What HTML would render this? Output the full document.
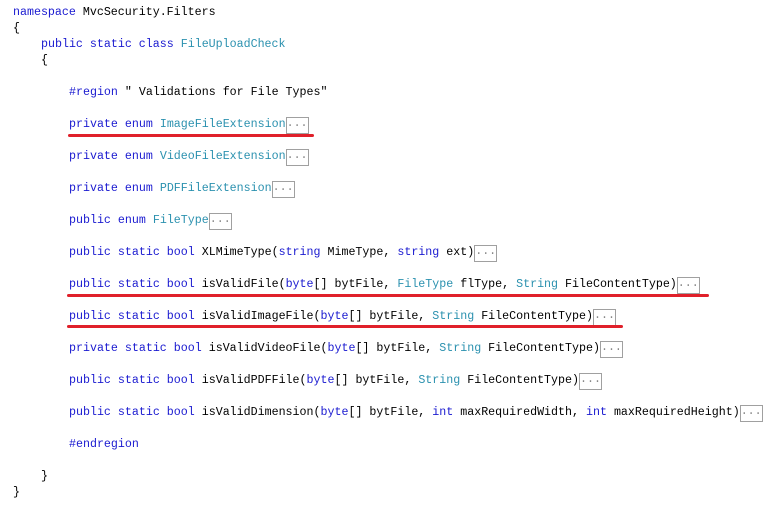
<!DOCTYPE html>
<html><head><style>
body{margin:0;width:773px;height:519px;background:#fff;position:relative;overflow:hidden;font-family:"Liberation Mono",monospace;font-size:11.65px;color:#000}
.l{position:absolute;left:13px;height:16px;line-height:16px;white-space:pre}
.k{color:#1a1ad0}.t{color:#2b91af}
.b{display:inline-block;border:1px solid #a0a0a0;color:#888;height:15px;line-height:12px;vertical-align:top}
.r{position:absolute;height:3px;background:#e0202a;border-radius:2px}
</style></head><body>
<div class="l" style="top:5px"><span class="k">namespace</span> MvcSecurity.Filters</div>
<div class="l" style="top:21px">{</div>
<div class="l" style="top:37px;left:41px"><span class="k">public static class</span> <span class="t">FileUploadCheck</span></div>
<div class="l" style="top:53px;left:41px">{</div>
<div class="l" style="top:85px;left:69px"><span class="k">#region</span> " Validations for File Types"</div>
<div class="l" style="top:117px;left:69px"><span class="k">private enum</span> <span class="t">ImageFileExtension</span><span class="b">...</span></div>
<div class="l" style="top:149px;left:69px"><span class="k">private enum</span> <span class="t">VideoFileExtension</span><span class="b">...</span></div>
<div class="l" style="top:181px;left:69px"><span class="k">private enum</span> <span class="t">PDFFileExtension</span><span class="b">...</span></div>
<div class="l" style="top:213px;left:69px"><span class="k">public enum</span> <span class="t">FileType</span><span class="b">...</span></div>
<div class="l" style="top:245px;left:69px"><span class="k">public static bool</span> XLMimeType(<span class="k">string</span> MimeType, <span class="k">string</span> ext)<span class="b">...</span></div>
<div class="l" style="top:277px;left:69px"><span class="k">public static bool</span> isValidFile(<span class="k">byte</span>[] bytFile, <span class="t">FileType</span> flType, <span class="t">String</span> FileContentType)<span class="b">...</span></div>
<div class="l" style="top:309px;left:69px"><span class="k">public static bool</span> isValidImageFile(<span class="k">byte</span>[] bytFile, <span class="t">String</span> FileContentType)<span class="b">...</span></div>
<div class="l" style="top:341px;left:69px"><span class="k">private static bool</span> isValidVideoFile(<span class="k">byte</span>[] bytFile, <span class="t">String</span> FileContentType)<span class="b">...</span></div>
<div class="l" style="top:373px;left:69px"><span class="k">public static bool</span> isValidPDFFile(<span class="k">byte</span>[] bytFile, <span class="t">String</span> FileContentType)<span class="b">...</span></div>
<div class="l" style="top:405px;left:69px"><span class="k">public static bool</span> isValidDimension(<span class="k">byte</span>[] bytFile, <span class="k">int</span> maxRequiredWidth, <span class="k">int</span> maxRequiredHeight)<span class="b">...</span></div>
<div class="l" style="top:437px;left:69px"><span class="k">#endregion</span></div>
<div class="l" style="top:469px;left:41px">}</div>
<div class="l" style="top:485px">}</div>
<div class="r" style="left:68px;top:134px;width:246px"></div>
<div class="r" style="left:67px;top:294px;width:642px"></div>
<div class="r" style="left:67px;top:325px;width:556px"></div>
</body></html>
